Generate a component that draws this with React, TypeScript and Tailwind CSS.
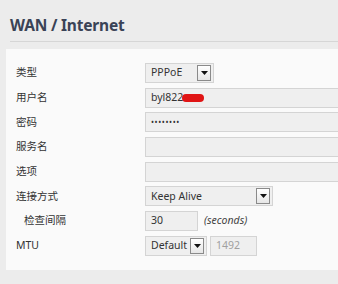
import type { ReactNode } from "react";

const cjk = "font-['Noto_Sans','Noto_Sans_CJK_SC',sans-serif]";

function Arrow() {
  return (
    <span className="ml-auto mr-[2px] flex h-[16px] w-[14px] shrink-0 items-center justify-center border border-[#8a8a8a] bg-gradient-to-b from-white to-[#e6e6e6]">
      <svg width="7" height="4" viewBox="0 0 7 4">
        <path d="M0 0h7L3.5 4z" fill="#111" />
      </svg>
    </span>
  );
}

function Box({ w, children, dim }: { w: string; children?: ReactNode; dim?: boolean }) {
  return (
    <div
      className={`flex h-[20px] shrink-0 items-center border border-[#d4d4d4] bg-[#efefef] pl-[5px] text-[10.5px] ${
        dim ? "text-[#a0a0a0]" : "text-[#333]"
      } ${w}`}
    >
      {children}
    </div>
  );
}

function Row({ label, indent, children }: { label: string; indent?: boolean; children: ReactNode }) {
  return (
    <div className="flex h-[20px] items-center">
      <div className={`w-[139px] shrink-0 text-[10.5px] text-[#333] ${indent ? "pl-[18px]" : "pl-[10px]"}`}>{label}</div>
      {children}
    </div>
  );
}

export default function App() {
  return (
    <div className={`h-[284px] w-[338px] overflow-hidden bg-[#ececec] ${cjk}`}>
      <h1 className="pl-[10px] pt-[15px] text-[15.5px] font-bold leading-[20px] tracking-[-0.2px] text-[#3a4356]">
        WAN / Internet
      </h1>
      <div className="ml-[10px] mt-[6px] h-px bg-[#d6d6d6]" />
      <div className="ml-[6px] mt-[7px] flex h-[221px] flex-col gap-[4.7px] bg-[#fafafa] pt-[14px]">
        <Row label="类型">
          <Box w="w-[69px]">
            PPPoE
            <Arrow />
          </Box>
        </Row>
        <Row label="用户名">
          <Box w="w-[220px]">
            byl822
            <span className="-ml-[1px] h-[8px] w-[22px] rounded-[4px] bg-[#e01515]" />
          </Box>
        </Row>
        <Row label="密码">
          <Box w="w-[220px]">
            <span className="text-[8px] tracking-[0.6px]">••••••••</span>
          </Box>
        </Row>
        <Row label="服务名">
          <Box w="w-[220px]" />
        </Row>
        <Row label="选项">
          <Box w="w-[220px]" />
        </Row>
        <Row label="连接方式">
          <Box w="w-[128px]">
            Keep Alive
            <Arrow />
          </Box>
        </Row>
        <Row label="检查间隔" indent>
          <Box w="w-[53px]">30</Box>
          <span className="ml-[6px] text-[10.5px] italic text-[#444]">(seconds)</span>
        </Row>
        <Row label="MTU">
          <Box w="w-[62px]">
            Default
            <Arrow />
          </Box>
          <div className="ml-[3px]">
            <Box w="w-[47px]" dim>
              1492
            </Box>
          </div>
        </Row>
      </div>
    </div>
  );
}
